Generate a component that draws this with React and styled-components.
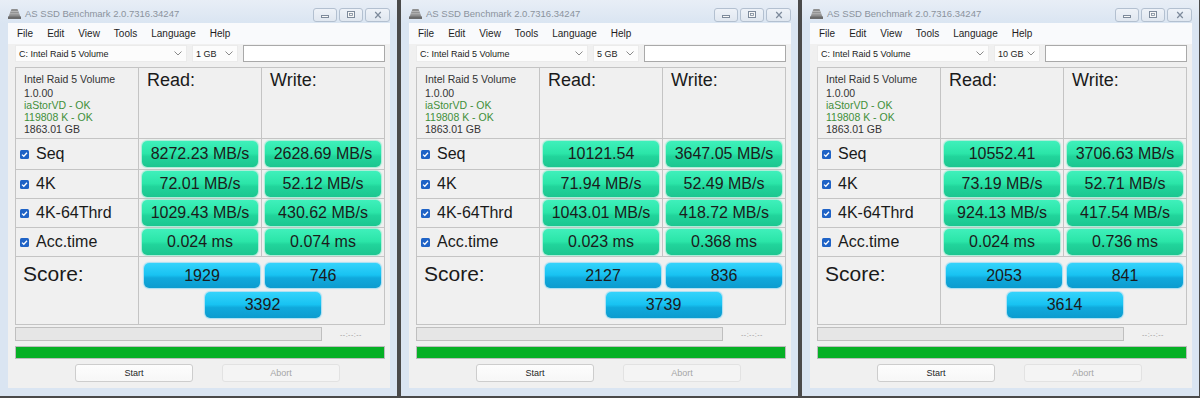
import React from "react";
import styled, { createGlobalStyle, css } from "styled-components";

const GlobalStyle = createGlobalStyle`
  html, body {
    margin: 0;
    padding: 0;
    background: #4a4a4a;
  }
  body {
    font-family: "Liberation Sans", Arial, sans-serif;
  }
`;

const runs = [
  {
    size: "1 GB",
    rows: [
      ["Seq", "8272.23 MB/s", "2628.69 MB/s"],
      ["4K", "72.01 MB/s", "52.12 MB/s"],
      ["4K-64Thrd", "1029.43 MB/s", "430.62 MB/s"],
      ["Acc.time", "0.024 ms", "0.074 ms"],
    ],
    score: ["1929", "746", "3392"],
  },
  {
    size: "5 GB",
    rows: [
      ["Seq", "10121.54", "3647.05 MB/s"],
      ["4K", "71.94 MB/s", "52.49 MB/s"],
      ["4K-64Thrd", "1043.01 MB/s", "418.72 MB/s"],
      ["Acc.time", "0.023 ms", "0.368 ms"],
    ],
    score: ["2127", "836", "3739"],
  },
  {
    size: "10 GB",
    rows: [
      ["Seq", "10552.41", "3706.63 MB/s"],
      ["4K", "73.19 MB/s", "52.71 MB/s"],
      ["4K-64Thrd", "924.13 MB/s", "417.54 MB/s"],
      ["Acc.time", "0.024 ms", "0.736 ms"],
    ],
    score: ["2053", "841", "3614"],
  },
];

const Page = styled.div`
  display: flex;
  gap: 4px;
  width: 1200px;
  height: 398px;
  overflow: hidden;
`;

const Window = styled.div`
  flex: none;
  width: 397px;
  height: 396px;
  box-sizing: border-box;
  padding-bottom: 8px;
  display: flex;
  flex-direction: column;
  background: #dae5f2;
`;

const TitleBar = styled.div`
  height: 23px;
  flex: none;
  display: flex;
  align-items: flex-start;
  padding: 0 7px 0 8px;
  background: linear-gradient(#e8eef6, #dae5f2);
`;

const AppIcon = styled.svg`
  margin-top: 8px;
  flex: none;
`;

const Title = styled.span`
  flex: 1;
  margin: 8px 0 0 4px;
  font-size: 9.5px;
  line-height: 12px;
  color: #8b939d;
  white-space: nowrap;
`;

const Controls = styled.div`
  display: flex;
  gap: 2px;
  margin-top: 8px;
`;

const CtrlButton = styled.div`
  width: ${(p) => (p.$wide ? 25 : 24)}px;
  height: 14px;
  box-sizing: border-box;
  border: 1px solid #b3c0d0;
  border-radius: 3px;
  background: linear-gradient(#eef2f8, #e0e7f0);
  display: flex;
  align-items: center;
  justify-content: center;
`;

const Client = styled.div`
  flex: 1;
  margin: 0 7px 0 8px;
  background: #f0f0f0;
  display: flex;
  flex-direction: column;
`;

const MenuBar = styled.div`
  height: 21px;
  display: flex;
  align-items: center;
  padding-left: 2px;
  background: #f9fafc;
  font-size: 10px;
  color: #1e1e1e;
`;

const MenuItem = styled.span`
  padding: 0 7px;
`;

const Content = styled.div`
  padding: 1px 5px 0 7px;
  display: flex;
  flex-direction: column;
`;

const SelectRow = styled.div`
  display: flex;
  gap: 5px;
  height: 17px;
`;

const Select = styled.div`
  width: ${(p) => p.$width}px;
  box-sizing: border-box;
  display: flex;
  align-items: center;
  justify-content: space-between;
  padding: 0 4px 0 3px;
  background: #fcfcfc;
  border: 1px solid #ebebeb;
  font-size: 9px;
  color: #222;
`;

const TextBox = styled.div`
  flex: 1;
  background: #fff;
  border: 1px solid #a9a9a9;
`;

const Table = styled.div`
  margin-top: 5px;
  display: grid;
  grid-template-columns: 122px 1fr 1fr;
  grid-template-rows: 70px 30px 28px 28px 28px 67px;
  gap: 1px;
  background: #c4c4c4;
  border: 1px solid #c4c4c4;
`;

const Cell = styled.div`
  background: #f0f0f0;
  min-width: 0;
`;

const InfoCell = styled(Cell)`
  padding: 5px 0 0 8px;
  font-size: 10.5px;
  line-height: 12px;
  color: #333;
`;

const InfoLine = styled.div`
  color: ${(p) => (p.$ok ? "#3f8f3a" : "#333")};
  margin-bottom: ${(p) => (p.$first ? 2 : 0)}px;
  white-space: nowrap;
`;

const HeadCell = styled(Cell)`
  padding: 1px 0 0 8px;
  font-size: 18px;
  line-height: 22px;
  color: #1a1a1a;
`;

const LabelCell = styled(Cell)`
  display: flex;
  align-items: center;
  gap: 7px;
  padding-left: 4px;
  font-size: 16px;
  color: #1a1a1a;
`;

const ValueCell = styled(Cell)`
  display: flex;
  align-items: center;
  padding: 0 3px;
`;

const barColors = {
  green: css`
    background: linear-gradient(
      #3ff0bb 0%,
      #2be5a8 48%,
      #21d49b 60%,
      #1cc690 100%
    );
    box-shadow: 0 0 1px 1px rgba(110, 235, 195, 0.55);
  `,
  blue: css`
    background: linear-gradient(
      #35d3fb 0%,
      #18c3f2 48%,
      #10a9dc 60%,
      #0c9ccf 100%
    );
    box-shadow: 0 0 1px 1px rgba(110, 210, 245, 0.55);
  `,
};

const Bar = styled.div`
  width: ${(p) => (p.$fixed ? "116px" : "100%")};
  height: ${(p) => p.$h || 26}px;
  border-radius: 5px;
  display: flex;
  align-items: center;
  justify-content: center;
  font-size: 16px;
  color: #1b1b1b;
  white-space: nowrap;
  ${(p) => barColors[p.$color]}
`;

const ScoreLabel = styled(Cell)`
  padding: 4px 0 0 7px;
  font-size: 21px;
  line-height: 26px;
  color: #1a1a1a;
`;

const ScoreCell = styled(Cell)`
  grid-column: 2 / span 2;
  display: grid;
  grid-template-columns: 1fr 1fr;
  column-gap: 5px;
  row-gap: 4px;
  align-content: start;
  padding: 6px 3px 0 5px;
`;

const TotalSlot = styled.div`
  grid-column: 1 / span 2;
  justify-self: center;
`;

const ProgressRow = styled.div`
  margin-top: 2px;
  height: 14px;
  display: flex;
  align-items: center;
`;

const Track = styled.div`
  width: 307px;
  height: 14px;
  box-sizing: border-box;
  background: #e6e6e6;
  border: 1px solid #bfbfbf;
`;

const Elapsed = styled.span`
  margin-left: 18px;
  font-size: 7px;
  color: #9a9a9a;
  letter-spacing: 0.5px;
`;

const GreenBar = styled.div`
  margin-top: 5px;
  height: 13px;
  box-sizing: border-box;
  background: #06b025;
  border: 1px solid #bcbcbc;
`;

const ButtonRow = styled.div`
  margin-top: 5px;
  display: flex;
  gap: 29px;
  padding-left: 60px;
`;

const Button = styled.div`
  width: 118px;
  height: 18px;
  box-sizing: border-box;
  display: flex;
  align-items: center;
  justify-content: center;
  border-radius: 3px;
  font-size: 9px;
  ${(p) =>
    p.$disabled
      ? css`
          background: #f4f4f4;
          border: 1px solid #e2e2e2;
          color: #a6a6a6;
        `
      : css`
          background: linear-gradient(#fdfdfd, #f7f7f7);
          border: 1px solid #cdcdcd;
          color: #1e1e1e;
        `}
`;

const Chevron = () => (
  <svg width="8" height="5" viewBox="0 0 8 5">
    <polyline points="0.5,0.5 4,4 7.5,0.5" fill="none" stroke="#8a8a8a" strokeWidth="1" />
  </svg>
);

const Check = () => (
  <svg width="9" height="9" viewBox="0 0 9 9" style={{ flex: "none" }}>
    <rect x="0" y="0" width="9" height="9" rx="1.5" fill="#1f63c6" />
    <polyline points="2,4.6 3.8,6.3 7,2.8" fill="none" stroke="#fff" strokeWidth="1.3" />
  </svg>
);

const DriveIcon = () => (
  <AppIcon width="13" height="11" viewBox="0 0 13 11">
    <path d="M3.5 1h6l3 8h-12z" fill="#8f8f8f" />
    <path d="M2.6 3.6h7.8M1.8 5.8h9.4" stroke="#c4c4c4" strokeWidth="0.8" />
    <rect x="0" y="8.5" width="13" height="2.5" fill="#6b6b6b" />
  </AppIcon>
);

const WindowControls = () => (
  <Controls>
    <CtrlButton>
      <svg width="10" height="8" viewBox="0 0 10 8">
        <rect x="1.5" y="4.5" width="7" height="2" fill="#f8f8f8" stroke="#7d8a9b" />
      </svg>
    </CtrlButton>
    <CtrlButton>
      <svg width="10" height="8" viewBox="0 0 10 8">
        <rect x="1.5" y="0.5" width="7" height="6" fill="#f8f8f8" stroke="#7d8a9b" />
        <rect x="3.5" y="2.5" width="3" height="2" fill="none" stroke="#7d8a9b" strokeWidth="0.8" />
      </svg>
    </CtrlButton>
    <CtrlButton $wide>
      <svg width="10" height="8" viewBox="0 0 10 8">
        <path d="M2.2 1 L7.8 7 M7.8 1 L2.2 7" stroke="#7d8a9b" strokeWidth="1.2" />
      </svg>
    </CtrlButton>
  </Controls>
);

const menu = ["File", "Edit", "View", "Tools", "Language", "Help"];

const BenchWindow = ({ run }) => (
  <Window>
    <TitleBar>
      <DriveIcon />
      <Title>AS SSD Benchmark 2.0.7316.34247</Title>
      <WindowControls />
    </TitleBar>
    <Client>
      <MenuBar>
        {menu.map((m) => (
          <MenuItem key={m}>{m}</MenuItem>
        ))}
      </MenuBar>
      <Content>
        <SelectRow>
          <Select $width={172}>
            C: Intel Raid 5 Volume
            <Chevron />
          </Select>
          <Select $width={46}>
            {run.size}
            <Chevron />
          </Select>
          <TextBox />
        </SelectRow>

        <Table>
          <InfoCell>
            <InfoLine $first>Intel Raid 5 Volume</InfoLine>
            <InfoLine>1.0.00</InfoLine>
            <InfoLine $ok>iaStorVD - OK</InfoLine>
            <InfoLine $ok>119808 K - OK</InfoLine>
            <InfoLine>1863.01 GB</InfoLine>
          </InfoCell>
          <HeadCell>Read:</HeadCell>
          <HeadCell>Write:</HeadCell>

          {run.rows.map(([label, read, write]) => (
            <React.Fragment key={label}>
              <LabelCell>
                <Check />
                {label}
              </LabelCell>
              <ValueCell>
                <Bar $color="green">{read}</Bar>
              </ValueCell>
              <ValueCell>
                <Bar $color="green">{write}</Bar>
              </ValueCell>
            </React.Fragment>
          ))}

          <ScoreLabel>Score:</ScoreLabel>
          <ScoreCell>
            <Bar $color="blue" $h={25}>{run.score[0]}</Bar>
            <Bar $color="blue" $h={25}>{run.score[1]}</Bar>
            <TotalSlot>
              <Bar $color="blue" $fixed>{run.score[2]}</Bar>
            </TotalSlot>
          </ScoreCell>
        </Table>

        <ProgressRow>
          <Track />
          <Elapsed>--:--:--</Elapsed>
        </ProgressRow>
        <GreenBar />
        <ButtonRow>
          <Button>Start</Button>
          <Button $disabled>Abort</Button>
        </ButtonRow>
      </Content>
    </Client>
  </Window>
);

export default function App() {
  return (
    <>
      <GlobalStyle />
      <Page>
        {runs.map((run) => (
          <BenchWindow key={run.size} run={run} />
        ))}
      </Page>
    </>
  );
}
